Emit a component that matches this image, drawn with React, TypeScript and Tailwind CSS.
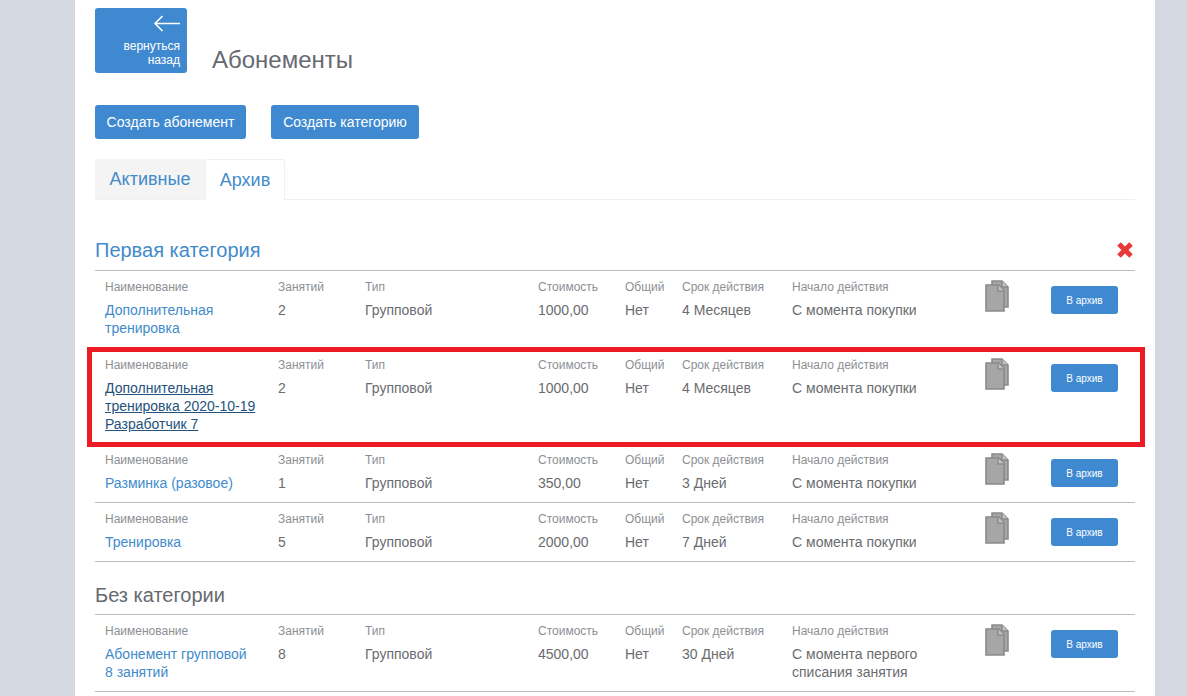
const font = { fontFamily: '"Liberation Sans", Arial, sans-serif' };

const first = [
  { name: ['Дополнительная', 'тренировка'], count: '2', type: 'Групповой', price: '1000,00', common: 'Нет', term: '4 Месяцев', start: ['С момента покупки'], h: 'h-[78px]' },
  { name: ['Дополнительная', 'тренировка 2020-10-19', 'Разработчик 7'], count: '2', type: 'Групповой', price: '1000,00', common: 'Нет', term: '4 Месяцев', start: ['С момента покупки'], h: 'h-[95px]', hover: true },
  { name: ['Разминка (разовое)'], count: '1', type: 'Групповой', price: '350,00', common: 'Нет', term: '3 Дней', start: ['С момента покупки'], h: 'h-[59px]' },
  { name: ['Тренировка'], count: '5', type: 'Групповой', price: '2000,00', common: 'Нет', term: '7 Дней', start: ['С момента покупки'], h: 'h-[59px]' },
];

const second = [
  { name: ['Абонемент групповой', '8 занятий'], count: '8', type: 'Групповой', price: '4500,00', common: 'Нет', term: '30 Дней', start: ['С момента первого', 'списания занятия'], h: 'h-[77px]' },
];

type Item = (typeof first)[number];

function Cell({ label, children }: { label: string; children: React.ReactNode }) {
  return (
    <div>
      <div className="text-[12px] leading-[17px] text-[#8c8f94]">{label}</div>
      <div className="mt-[5px] text-[14px] leading-[18px] text-[#6a6c6f]">{children}</div>
    </div>
  );
}

function CopyIcon() {
  return (
    <svg width="24" height="32" viewBox="0 0 24 32" className="mt-[1px]">
      <path d="M7 1h10l6 6v20H7z" fill="#a6a6a6" stroke="#8a8a8a" strokeWidth="1.6" />
      <path d="M17 1v6h6" fill="#c4c4c4" stroke="#8a8a8a" strokeWidth="1.4" />
      <path d="M1 5h13l5 5v21H1z" fill="#a6a6a6" stroke="#8a8a8a" strokeWidth="1.6" />
      <path d="M13 5v6h6" fill="#c4c4c4" stroke="#8a8a8a" strokeWidth="1.4" />
    </svg>
  );
}

function Row({ item }: { item: Item }) {
  return (
    <div className={`grid grid-cols-[173px_87px_173px_87px_57px_110px_193px_66px_67px] pl-[10px] pt-[8px] border-b border-[#b9bdc2] ${item.h}`}>
      <Cell label="Наименование">
        <a className={item.hover ? 'text-[#23527c] underline' : 'text-[#428bca]'}>
          {item.name.map((line) => (
            <div key={line}>{line}</div>
          ))}
        </a>
      </Cell>
      <Cell label="Занятий">{item.count}</Cell>
      <Cell label="Тип">{item.type}</Cell>
      <Cell label="Стоимость">{item.price}</Cell>
      <Cell label="Общий">{item.common}</Cell>
      <Cell label="Срок действия">{item.term}</Cell>
      <Cell label="Начало действия">
        {item.start.map((line) => (
          <div key={line}>{line}</div>
        ))}
      </Cell>
      <CopyIcon />
      <button className="mt-[7px] h-[28px] w-[67px] rounded-[3px] bg-[#3f89d1] text-center text-[10px] text-white">
        В архив
      </button>
    </div>
  );
}

export default function App() {
  return (
    <div className="relative h-[696px] w-[1187px] overflow-hidden bg-[#d4d8e1]" style={font}>
      <div className="mx-[32px] ml-[75px] h-full w-[1080px] bg-white px-[20px] pt-[8px]">
        <div className="flex items-start">
          <button className="flex h-[65px] w-[92px] flex-col items-end rounded-[3px] bg-[#3f89d1] pr-[7px] pt-[7px] text-right text-[12px] leading-[14px] text-white">
            <svg width="27" height="18" viewBox="0 0 27 18" fill="none" stroke="white" strokeWidth="1.6">
              <path d="M27 8.5H2M9.5 1 2 8.5 9.5 16" />
            </svg>
            <span className="mt-[6px]">вернуться</span>
            <span>назад</span>
          </button>
          <h1 className="ml-[25px] mt-[37px] text-[24px] leading-[30px] text-[#666a70]">Абонементы</h1>
        </div>

        <div className="mt-[30px] flex gap-[25px]">
          <button className="h-[34px] w-[151px] rounded-[3px] bg-[#3f89d1] text-[14px] text-white">Создать абонемент</button>
          <button className="h-[34px] w-[148px] rounded-[3px] bg-[#3f89d1] text-[14px] text-white">Создать категорию</button>
        </div>

        <div className="mt-[20px] flex h-[41px] border-b border-[#f0f0f0] text-[18px] text-[#428bca]">
          <div className="flex h-[40px] w-[110px] items-center justify-center rounded-t-[3px] bg-[#f4f4f4]">Активные</div>
          <div className="flex h-[41px] w-[80px] items-center justify-center rounded-t-[3px] border border-b-0 border-[#f0f0f0] bg-white">Архив</div>
        </div>

        <div className="mt-[36px] flex h-[35px] items-center justify-between border-b border-[#b9bdc2] pb-[6px]">
          <h2 className="text-[20px] text-[#428bca]">Первая категория</h2>
          <svg width="18" height="18" viewBox="0 0 18 18" className="mr-[1px]">
            <path d="M3 3l12 12M15 3 3 15" stroke="#e9383a" strokeWidth="5" />
          </svg>
        </div>
        {first.map((item, i) => (
          <Row key={i} item={item} />
        ))}

        <h2 className="mt-[22px] h-[31px] border-b border-[#b9bdc2] text-[20px] leading-[22px] text-[#666a70]">Без категории</h2>
        {second.map((item, i) => (
          <Row key={i} item={item} />
        ))}
      </div>
      <div className="absolute left-[87px] top-[347px] h-[100px] w-[1058px] border-[5px] border-[#ed1c24]" />
    </div>
  );
}
